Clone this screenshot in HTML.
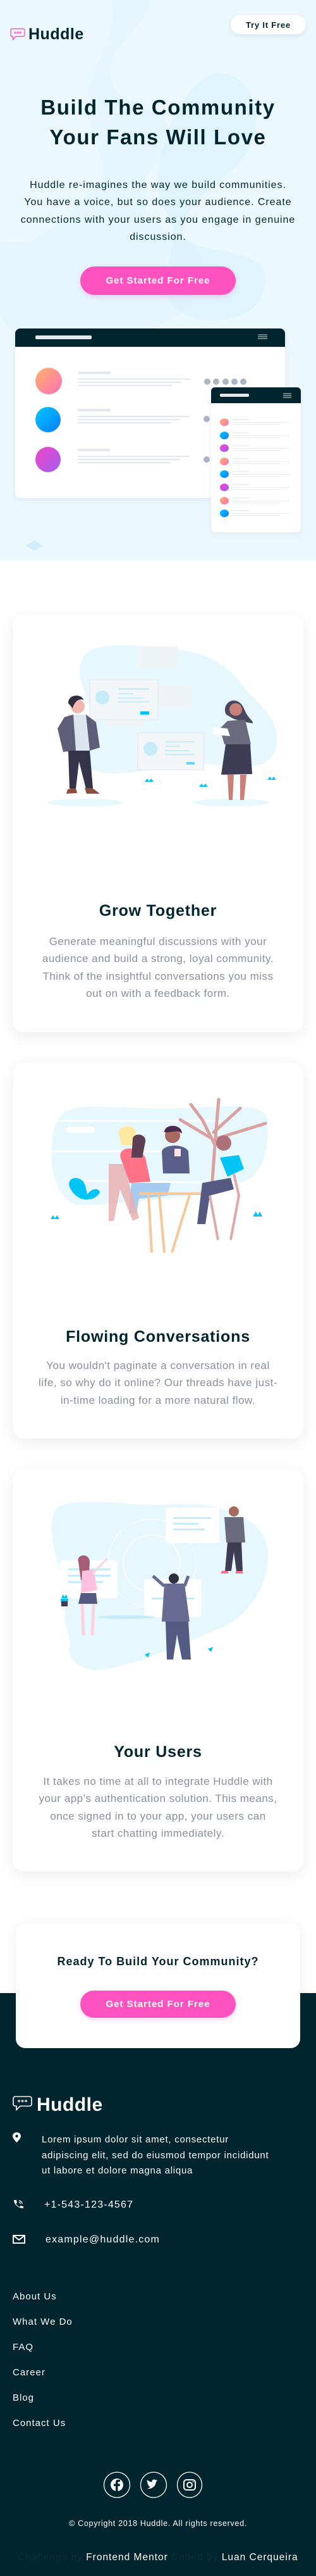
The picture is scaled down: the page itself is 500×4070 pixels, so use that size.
<!DOCTYPE html>
<html><head><meta charset="utf-8">
<style>
*{margin:0;padding:0;box-sizing:border-box}
body{width:500px;height:4070px;position:relative;background:#fff;font-family:"Liberation Sans",sans-serif;overflow:hidden;color:#00252e}
.abs{position:absolute}
.hero{left:0;top:0;width:500px;height:885px;background:#ebf8fe;overflow:hidden}
.c{text-align:center;white-space:nowrap}
.btn{background:#ff52c1;color:#fff;border-radius:30px;font-weight:bold;font-size:15px;letter-spacing:1px;display:flex;align-items:center;justify-content:center;box-shadow:0 3px 8px rgba(255,82,193,.25)}
.card{left:20px;width:460px;background:#fff;border-radius:18px;box-shadow:0 6px 24px rgba(0,0,0,.08)}
.ct{position:absolute;left:0;width:460px;text-align:center;font-weight:bold;font-size:25px;letter-spacing:.8px;color:#00252e}
.cp{position:absolute;left:0;width:460px;text-align:center;font-size:17px;line-height:27.3px;color:#8a8f9c;letter-spacing:.5px;white-space:nowrap}
.foot{left:0;top:3149px;width:500px;height:921px;background:#00252e}
.fl{position:absolute;left:20px;color:#fff;font-size:15px;letter-spacing:1px}
</style></head><body>

<div class="abs hero">
<svg class="abs" style="left:0;top:0" width="500" height="885">
<path d="M175 0 L240 0 C220 60 170 70 175 120 C180 170 240 160 270 200 C300 250 200 260 230 330 C260 390 330 360 320 440 C310 520 200 520 130 560 C60 600 20 520 0 500 L0 380 C60 400 110 330 150 300 C190 260 120 200 140 140 C160 80 190 40 175 0Z" fill="#e2f5fd" opacity=".7"/>
<path d="M330 120 C380 100 420 160 400 220 C380 280 300 300 290 360 C280 410 420 380 420 440 C420 520 300 520 270 480 C240 430 300 380 260 330 C230 290 270 150 330 120Z" fill="#dcf3fd" opacity=".8"/>
<path d="M40 862 L54 854 L68 862 L54 870Z" fill="#cfeefc"/>
</svg>
<svg class="abs" style="left:16px;top:44px" width="24" height="21" viewBox="0 0 24 21"><path d="M3 1.5h18a2 2 0 0 1 2 2v8a2 2 0 0 1-2 2H9l-4.5 5v-5H3a2 2 0 0 1-2-2v-8a2 2 0 0 1 2-2z" fill="none" stroke="#ff52c1" stroke-width="1.4"/><circle cx="8" cy="7.5" r="1.1" fill="none" stroke="#ff52c1"/><circle cx="12" cy="7.5" r="1.1" fill="none" stroke="#ff52c1"/><circle cx="16" cy="7.5" r="1.1" fill="none" stroke="#ff52c1"/></svg>
<div class="abs" style="left:45px;top:40px;font-size:25px;font-weight:bold;letter-spacing:.5px;color:#00252e">Huddle</div>
<div class="abs" style="left:365px;top:24px;width:119px;height:30px;background:#fff;border-radius:15px;box-shadow:0 3px 8px rgba(0,0,0,.08);font-size:13px;font-weight:bold;letter-spacing:.8px;display:flex;align-items:center;justify-content:center;color:#00252e">Try It Free</div>
<div class="abs c" style="left:0;top:146px;width:500px;font-size:33px;font-weight:bold;letter-spacing:1.6px;line-height:47px">Build The Community<br>Your Fans Will Love</div>
<div class="abs c" style="left:0;top:279px;width:500px;font-size:16px;letter-spacing:.95px;line-height:27.3px;color:#00252e">Huddle re-imagines the way we build communities.<br>You have a voice, but so does your audience. Create<br>connections with your users as you engage in genuine<br>discussion.</div>
<div class="abs btn" style="left:127px;top:421px;width:246px;height:45px">Get Started For Free</div>
<svg class="abs" style="left:0;top:0" width="500" height="885">
<defs>
<linearGradient id="g1" x1="0" y1="0" x2="1" y2="1"><stop offset="0" stop-color="#ffb36b"/><stop offset="1" stop-color="#ff6fb6"/></linearGradient>
<linearGradient id="g2" x1="0" y1="0" x2="1" y2="1"><stop offset="0" stop-color="#00c8f8"/><stop offset="1" stop-color="#0a7cff"/></linearGradient>
<linearGradient id="g3" x1="0" y1="0" x2="1" y2="1"><stop offset="0" stop-color="#f145c8"/><stop offset="1" stop-color="#a25df0"/></linearGradient>
<filter id="sh" x="-10%" y="-10%" width="120%" height="130%"><feDropShadow dx="0" dy="3" stdDeviation="4" flood-color="#7aa" flood-opacity=".15"/></filter>
</defs>
<g filter="url(#sh)"><rect x="24" y="519" width="427" height="268" rx="8" fill="#fff"/></g>
<path d="M24 548V527a8 8 0 0 1 8-8h411a8 8 0 0 1 8 8v21z" fill="#00252e"/>
<rect x="56" y="530" width="89" height="6" rx="2" fill="#e4e8ec"/>
<g stroke="#d8dde2" stroke-width="1"><line x1="408" y1="529" x2="423" y2="529"/><line x1="408" y1="532" x2="423" y2="532"/><line x1="408" y1="535" x2="423" y2="535"/></g>
<ellipse cx="77" cy="602" rx="21" ry="21" fill="url(#g1)"/>
<ellipse cx="76" cy="663" rx="20" ry="20" fill="url(#g2)"/>
<ellipse cx="76" cy="726" rx="20" ry="20" fill="url(#g3)"/>
<g fill="#e4e8ee">
<rect x="124" y="587" width="51" height="4"/><rect x="124" y="598" width="178" height="2"/><rect x="124" y="603" width="163" height="2"/><rect x="124" y="608" width="148" height="2"/>
<rect x="123" y="646" width="51" height="4"/><rect x="123" y="657" width="177" height="2"/><rect x="123" y="662" width="162" height="2"/><rect x="123" y="667" width="148" height="2"/>
<rect x="123" y="709" width="51" height="4"/><rect x="123" y="720" width="177" height="2"/><rect x="123" y="725" width="162" height="2"/><rect x="123" y="730" width="148" height="2"/>
</g>
<g fill="#aab6c4"><circle cx="328" cy="603" r="5"/><circle cx="342" cy="603" r="5"/><circle cx="357" cy="603" r="5"/><circle cx="371" cy="603" r="5"/><circle cx="385" cy="603" r="5"/><circle cx="327" cy="662" r="5"/><circle cx="327" cy="726" r="5"/></g>
<g filter="url(#sh)"><rect x="334" y="612" width="142" height="229" rx="6" fill="#fff"/></g>
<path d="M334 637V618a6 6 0 0 1 6-6h130a6 6 0 0 1 6 6v19z" fill="#00252e"/>
<rect x="348" y="622" width="46" height="5" rx="2" fill="#e4e8ec"/>
<g stroke="#d8dde2"><line x1="448" y1="622" x2="461" y2="622"/><line x1="448" y1="625" x2="461" y2="625"/><line x1="448" y1="628" x2="461" y2="628"/></g>
<g>
<ellipse cx="355" cy="667" rx="7" ry="6" fill="url(#g1)"/><ellipse cx="355" cy="688" rx="7" ry="6" fill="url(#g2)"/><ellipse cx="355" cy="708" rx="7" ry="6" fill="url(#g3)"/><ellipse cx="355" cy="729" rx="7" ry="6" fill="url(#g1)"/><ellipse cx="355" cy="749" rx="7" ry="6" fill="url(#g2)"/><ellipse cx="355" cy="770" rx="7" ry="6" fill="url(#g3)"/><ellipse cx="355" cy="791" rx="7" ry="6" fill="url(#g1)"/><ellipse cx="355" cy="811" rx="7" ry="6" fill="url(#g2)"/>
</g>
<g fill="#e8ecf0">
<rect x="368" y="662" width="26" height="1.5"/><rect x="368" y="667" width="90" height="1"/><rect x="368" y="670" width="75" height="1"/>
<rect x="368" y="683" width="26" height="1.5"/><rect x="368" y="688" width="90" height="1"/><rect x="368" y="691" width="75" height="1"/>
<rect x="368" y="703" width="26" height="1.5"/><rect x="368" y="708" width="90" height="1"/><rect x="368" y="711" width="75" height="1"/>
<rect x="368" y="724" width="26" height="1.5"/><rect x="368" y="729" width="90" height="1"/><rect x="368" y="732" width="75" height="1"/>
<rect x="368" y="744" width="26" height="1.5"/><rect x="368" y="749" width="90" height="1"/><rect x="368" y="752" width="75" height="1"/>
<rect x="368" y="765" width="26" height="1.5"/><rect x="368" y="770" width="90" height="1"/><rect x="368" y="773" width="75" height="1"/>
<rect x="368" y="786" width="26" height="1.5"/><rect x="368" y="791" width="90" height="1"/><rect x="368" y="794" width="75" height="1"/>
<rect x="368" y="806" width="26" height="1.5"/><rect x="368" y="811" width="90" height="1"/><rect x="368" y="814" width="75" height="1"/>
</g>
</svg>
</div>

<div class="abs card" style="top:971px;height:660px">
<svg class="abs" style="left:0;top:0" width="460" height="360">
<path d="M110 70 C120 40 200 48 260 55 C320 62 350 90 370 120 C400 150 420 170 418 200 C416 240 380 245 330 238 C280 232 250 240 200 248 C150 255 120 250 110 230 C100 200 130 170 120 140 C110 110 100 95 110 70Z" fill="#e6f8fe"/>
<ellipse cx="115" cy="297" rx="60" ry="6" fill="#e6f8fe"/><ellipse cx="346" cy="297" rx="60" ry="6" fill="#e6f8fe"/>
<rect x="198" y="50" width="63" height="34" fill="#eef3f6"/><rect x="220" y="112" width="63" height="34" fill="#eef3f6"/><rect x="145" y="143" width="63" height="34" fill="#eef3f6"/>
<rect x="122" y="103" width="108" height="63" fill="#f3f6f8" stroke="#e0e5ea"/><circle cx="142" cy="131" r="11" fill="#c6ecf8"/><rect x="167" y="116" width="49" height="3" fill="#c6ecf8"/><rect x="167" y="124" width="24" height="2" fill="#c6ecf8"/><rect x="167" y="131" width="40" height="2" fill="#c6ecf8"/><rect x="167" y="137" width="49" height="2" fill="#c6ecf8"/><rect x="202" y="153" width="14" height="5" fill="#00c4f5"/>
<rect x="198" y="187" width="104" height="58" fill="#f3f6f8" stroke="#e0e5ea"/><circle cx="218" cy="212" r="11" fill="#c6ecf8"/><rect x="241" y="200" width="47" height="2" fill="#c6ecf8"/><rect x="241" y="207" width="24" height="2" fill="#c6ecf8"/><rect x="241" y="214" width="40" height="2" fill="#c6ecf8"/><rect x="241" y="220" width="47" height="2" fill="#c6ecf8"/><rect x="275" y="233" width="13" height="4" fill="#5cd9f8"/>
<circle cx="103" cy="145" r="11" fill="#f0b7b0"/><path d="M88 140 C88 125 110 125 112 135 C105 132 98 137 95 148Z" fill="#2f2e41"/>
<path d="M88 158 L118 158 L126 215 L82 215Z" fill="#dfe5ee"/><path d="M82 162 L96 158 L100 215 L80 217 L71 180Z M116 158 L132 170 L138 210 L122 215Z" fill="#5f5e78"/>
<path d="M88 215 L122 215 L127 275 L116 275 L105 232 L100 275 L90 275Z" fill="#34334a"/>
<path d="M87 276 L100 274 L102 282 L85 283Z M114 274 L126 274 L138 283 L117 283Z" fill="#8c4e3c"/>
<path d="M338 158 C332 148 340 134 352 136 C365 138 366 152 372 160 C378 168 380 168 380 172 C370 170 360 168 350 165Z" fill="#4a4860"/><circle cx="353" cy="150" r="10" fill="#c88078"/>
<path d="M340 168 L368 166 L377 205 L335 205 L328 180Z" fill="#6a697e"/><path d="M317 178 L340 180 L344 192 L318 190Z" fill="#fff"/>
<path d="M337 205 L376 205 L379 252 L330 253Z" fill="#3f3d56"/>
<path d="M340 253 L350 253 L348 293 L342 293Z M360 253 L370 253 L366 293 L360 293Z" fill="#c88078"/>
<path d="M209 264 l4 -5 l3 4 l3 -4 l4 5Z M295 272 l4 -5 l3 4 l3 -4 l4 5Z M403 261 l4 -5 l3 4 l3 -4 l4 5Z" fill="#00c4f5"/>
</svg>
<div class="ct" style="top:454px">Grow Together</div>
<div class="cp" style="top:503px">Generate meaningful discussions with your<br>audience and build a strong, loyal community.<br>Think of the insightful conversations you miss<br>out on with a feedback form.</div>
</div>

<div class="abs card" style="top:1679px;height:594px">
<svg class="abs" style="left:0;top:0" width="460" height="320">
<path d="M80 80 C100 60 180 75 260 72 C330 70 400 60 403 90 C406 130 400 160 380 180 C340 210 200 220 120 225 C80 230 60 190 62 140 C63 110 65 95 80 80Z" fill="#e6f8fe"/>
<g stroke="#fff" stroke-width="3"><line x1="70" y1="92" x2="330" y2="92"/><line x1="60" y1="140" x2="250" y2="140"/><line x1="80" y1="186" x2="360" y2="190"/></g>
<rect x="85" y="101" width="45" height="10" rx="5" fill="#fff"/>
<path d="M315 200 L320 130 L300 90 L282 66 M320 130 L326 58 M318 110 L360 72 M322 120 L400 96 M312 118 L265 90" stroke="#d9a2a0" stroke-width="5" fill="none" stroke-linecap="round"/>
<path d="M172 154 C162 130 200 130 210 150 L218 188 L185 190Z" fill="#ff7285"/><path d="M168 110 C168 98 195 96 195 112 L190 130 L172 130Z" fill="#ffe8a0"/><path d="M190 120 C192 110 212 112 210 125 L205 150 L188 150Z" fill="#5d3f55"/>
<path d="M188 190 L250 190 L245 210 L200 215 L196 238 L184 238Z" fill="#a8cbf2"/>
<path d="M152 160 L175 160 L200 245 L190 250 L170 200 L160 250 L152 250Z" fill="#e8b0b0" opacity=".85"/>
<circle cx="253" cy="115" r="12" fill="#a86a5f"/><path d="M240 110 C240 96 268 96 268 112 L262 108 L246 110Z" fill="#4a2b4a"/>
<path d="M236 140 C240 128 272 128 278 140 L280 175 L238 175Z" fill="#5a5f8a"/><rect x="256" y="136" width="10" height="12" fill="#ffe4e8"/>
<rect x="200" y="205" width="112" height="4" fill="#f5c89a"/><path d="M232 209 L240 300 M280 209 L252 300 M215 209 L220 300" stroke="#f5c89a" stroke-width="4"/>
<circle cx="334" cy="127" r="12" fill="#ad717a"/><path d="M328 150 L358 146 L366 168 L340 180Z" fill="#00c4f5"/>
<path d="M300 190 L345 182 L350 200 L312 210 L305 255 L292 255Z" fill="#555a82"/><path d="M350 176 L358 210 L345 280 M312 210 L325 280" stroke="#e0a8a8" stroke-width="4" fill="none"/>
<path d="M92 200 C80 180 110 175 115 195 L120 215 C115 218 100 215 92 200Z M115 215 C120 200 135 195 138 205 C134 212 125 218 115 215Z" fill="#00c4f5"/>
<path d="M60 247 l4-6 l3 5 l3-5 l4 6Z M380 243 l5-8 l3 6 l3-6 l4 8Z" fill="#00c4f5"/>
</svg>
<div class="ct" style="top:419px">Flowing Conversations</div>
<div class="cp" style="top:465px">You wouldn't paginate a conversation in real<br>life, so why do it online? Our threads have just-<br>in-time loading for a more natural flow.</div>
</div>

<div class="abs card" style="top:2322px;height:635px">
<svg class="abs" style="left:0;top:0" width="460" height="340">
<path d="M70 60 C100 40 200 60 250 55 C320 50 390 70 403 120 C410 170 380 230 330 250 C280 270 220 300 150 315 C110 322 85 300 90 280 C95 260 70 240 90 200 C70 150 50 90 70 60Z" fill="#e6f8fe"/>
<circle cx="220" cy="148" r="45" fill="none" stroke="#fff" stroke-width="1.5"/><circle cx="220" cy="148" r="70" fill="none" stroke="#fff" stroke-width="1"/>
<rect x="75" y="143" width="91" height="60" rx="4" fill="#fff"/><rect x="88" y="156" width="67" height="3" fill="#c6ecf8"/><rect x="88" y="166" width="67" height="3" fill="#c6ecf8"/><rect x="88" y="176" width="55" height="3" fill="#c6ecf8"/>
<rect x="242" y="60" width="85" height="56" rx="4" fill="#fff"/><rect x="254" y="75" width="60" height="3" fill="#c6ecf8"/><rect x="254" y="84" width="40" height="3" fill="#c6ecf8"/><rect x="254" y="93" width="50" height="3" fill="#c6ecf8"/>
<rect x="208" y="173" width="91" height="60" rx="4" fill="#fff"/><rect x="220" y="202" width="67" height="3" fill="#c6ecf8"/>
<ellipse cx="180" cy="233" rx="45" ry="3" fill="#c6ecf8"/>
<circle cx="113" cy="146" r="8" fill="#ffd1da"/><path d="M104 145 C100 135 120 130 122 145 L120 180 L108 175Z" fill="#a45d74"/>
<path d="M110 160 L128 158 L134 190 L108 195Z" fill="#ffbfe0"/><path d="M126 165 L150 140" stroke="#ffd1da" stroke-width="3"/>
<path d="M108 195 L132 195 L134 212 L104 212Z" fill="#555a82"/><path d="M110 212 L112 262 M128 212 L126 262" stroke="#ffd1da" stroke-width="5"/>
<circle cx="255" cy="172" r="8" fill="#2f2e41"/><path d="M240 180 L272 180 L280 240 L236 240Z" fill="#6a6b92"/><path d="M240 184 L222 168 M272 184 L278 168" stroke="#6a6b92" stroke-width="5"/>
<path d="M242 240 L278 240 L282 300 L268 300 L260 260 L254 300 L244 300Z" fill="#555a82"/>
<circle cx="350" cy="66" r="8" fill="#a86a5f"/><path d="M335 75 L365 75 L368 115 L338 115Z" fill="#6a697e"/><path d="M340 115 L362 115 L364 160 L354 160 L350 130 L346 160 L336 160Z" fill="#3f3d56"/>
<path d="M331 160 l10 0 l0 4 l-12 0Z M353 160 l10 0 l2 4 l-12 0Z" fill="#ff6b85"/>
<path d="M77 203 l3-6 l2 4 l3-4 l2 6Z M76 204 h12 l-1 10 h-10Z" fill="#00c4f5"/><rect x="77" y="208" width="10" height="8" fill="#3f3d56"/>
<path d="M209 292 l8-3 l-3 8Z M309 283 l8-3 l-3 8Z" fill="#00c4f5"/>
</svg>
<div class="ct" style="top:432px">Your Users</div>
<div class="cp" style="top:479px">It takes no time at all to integrate Huddle with<br>your app's authentication solution. This means,<br>once signed in to your app, your users can<br>start chatting immediately.</div>
</div>

<div class="abs foot"></div>
<div class="abs" style="left:25px;top:3039px;width:450px;height:197px;background:#fff;border-radius:15px;box-shadow:0 5px 20px rgba(0,0,0,.08)"></div>
<div class="abs c" style="left:0;top:3089px;width:500px;font-size:18px;font-weight:bold;letter-spacing:1px">Ready To Build Your Community?</div>
<div class="abs btn" style="left:127px;top:3145px;width:246px;height:43px">Get Started For Free</div>

<svg class="abs" style="left:20px;top:3311px" width="31" height="26" viewBox="0 0 31 26"><path d="M4 1.5h23a3 3 0 0 1 3 3v9a3 3 0 0 1-3 3H12l-6 6v-6H4a3 3 0 0 1-3-3v-9a3 3 0 0 1 3-3z" fill="none" stroke="#fff" stroke-width="1.6"/><circle cx="10" cy="8.5" r="1.3" fill="none" stroke="#fff" stroke-width="1.2"/><circle cx="15.5" cy="8.5" r="1.3" fill="none" stroke="#fff" stroke-width="1.2"/><circle cx="21" cy="8.5" r="1.3" fill="none" stroke="#fff" stroke-width="1.2"/></svg>
<div class="abs" style="left:58px;top:3309px;font-size:30px;font-weight:bold;color:#fff;letter-spacing:.5px">Huddle</div>
<svg class="abs" style="left:20px;top:3369px" width="13" height="16" viewBox="0 0 13 16"><path d="M6.5 0C2.9 0 0 2.7 0 6c0 4 6.5 10 6.5 10S13 10 13 6C13 2.7 10.1 0 6.5 0z" fill="#fff"/><circle cx="6.5" cy="6" r="2.2" fill="#00252e"/></svg>
<div class="abs" style="left:66px;top:3369px;color:#fff;font-size:15px;line-height:24.5px;letter-spacing:.75px;white-space:nowrap">Lorem ipsum dolor sit amet, consectetur<br>adipiscing elit, sed do eiusmod tempor incididunt<br>ut labore et dolore magna aliqua</div>
<svg class="abs" style="left:20px;top:3475px" width="19" height="15" viewBox="0 0 19 15"><path d="M2 1 L6 1 L7 5 L5 6.5 C6.5 9 8.5 11 11 12 L12.5 10 L17 11 L17 14 C9 14 2 8 2 1Z" fill="#fff"/><path d="M10 2 A5 5 0 0 1 15 7 M10 4.5 A2.5 2.5 0 0 1 12.5 7" stroke="#fff" stroke-width="1.3" fill="none"/></svg>
<div class="abs" style="left:70px;top:3475px;color:#fff;font-size:16px;letter-spacing:1.2px">+1-543-123-4567</div>
<svg class="abs" style="left:20px;top:3531px" width="20" height="14" viewBox="0 0 20 14"><rect x="1" y="1" width="18" height="12" fill="none" stroke="#fff" stroke-width="2"/><path d="M1 1 L10 8 L19 1" stroke="#fff" stroke-width="2" fill="none"/></svg>
<div class="abs" style="left:72px;top:3530px;color:#fff;font-size:16px;letter-spacing:1.2px">example@huddle.com</div>
<div class="fl" style="top:3620px">About Us</div>
<div class="fl" style="top:3660px">What We Do</div>
<div class="fl" style="top:3700px">FAQ</div>
<div class="fl" style="top:3740px">Career</div>
<div class="fl" style="top:3780px">Blog</div>
<div class="fl" style="top:3820px">Contact Us</div>
<svg class="abs" style="left:160px;top:3903px" width="165" height="46">
<g fill="none" stroke="#fff" stroke-width="1.3"><ellipse cx="25" cy="23" rx="20.5" ry="20"/><ellipse cx="83" cy="23" rx="20.5" ry="20"/><ellipse cx="140" cy="23" rx="19.5" ry="20"/></g>
<circle cx="25" cy="23" r="10" fill="#fff"/><path d="M26.5 33 V25 H29.5 L30 21.5 H26.5 V19.5 C26.5 18.5 27 18 28 18 H30 V15 C29 15 28 14.8 27 14.8 C24.5 14.8 23 16.5 23 19 V21.5 H20 V25 H23 V33Z" fill="#00252e"/>
<path d="M73 29 C80 30 86 26 87 18 L89.5 16 L87 16.5 L88.5 14.5 L86 15.5 C84 13.5 80 14.5 80.5 18.5 C77 18.5 75 17 73 15 C72 17 73 19.5 74.5 20.5 L73.3 20.2 C73.3 22 74.5 23.2 76 23.6 L74.6 23.8 C75 25 76.4 26 78 26 C76.5 27.5 74.5 28.5 73 29Z" fill="#fff"/>
<rect x="131" y="15" width="18" height="16" rx="4" fill="none" stroke="#fff" stroke-width="2"/><circle cx="140" cy="23" r="4" fill="none" stroke="#fff" stroke-width="2"/><circle cx="145.5" cy="18" r="1" fill="#fff"/>
</svg>
<div class="abs c" style="left:0;top:3980px;width:500px;color:#fff;font-size:12.5px;letter-spacing:.7px">© Copyright 2018 Huddle. All rights reserved.</div>
<div class="abs c" style="left:0;top:4032px;width:500px;font-size:15.5px;letter-spacing:1px;color:#0f2f38">Challenge by <span style="color:#fff">Frontend Mentor</span> Coded by <span style="color:#fff">Luan Cerqueira</span></div>
</body></html>
